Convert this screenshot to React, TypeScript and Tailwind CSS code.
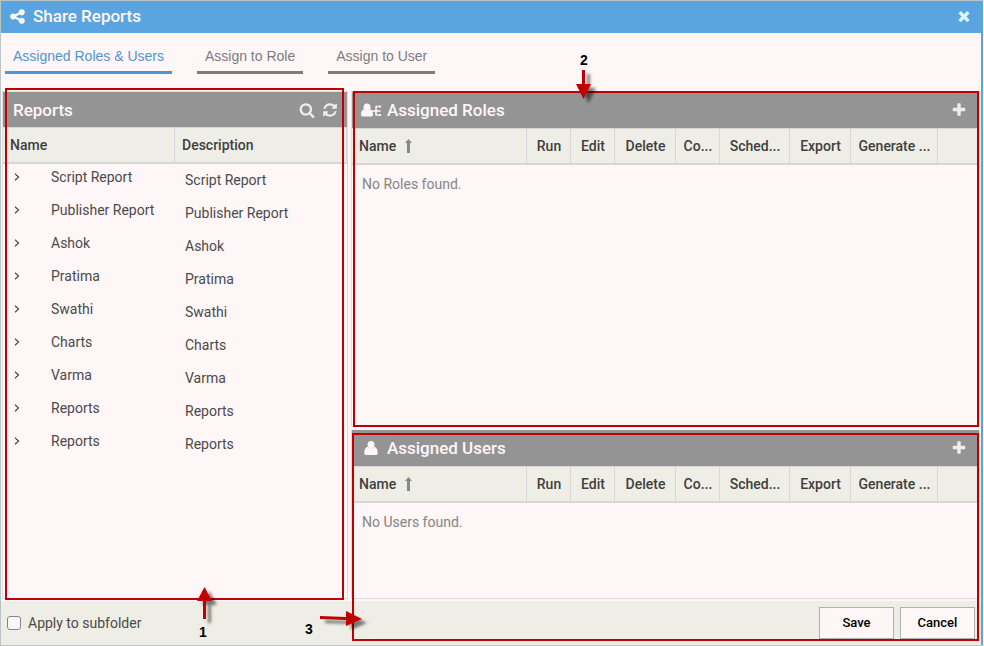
import React from "react";

const ICONS = {
  share:
    "M1344 1024q133 0 226.5 93.5t93.5 226.5-93.5 226.5-226.5 93.5-226.5-93.5-93.5-226.5q0-12 2-34l-360-180q-92 86-218 86-133 0-226.5-93.5t-93.5-226.5 93.5-226.5 226.5-93.5q126 0 218 86l360-180q-2-22-2-34 0-133 93.5-226.5t226.5-93.5 226.5 93.5 93.5 226.5-93.5 226.5-226.5 93.5q-126 0-218-86l-360 180q2 22 2 34t-2 34l360 180q92-86 218-86z",
  close:
    "M1490 1322q0 40-28 68l-136 136q-28 28-68 28t-68-28l-294-294-294 294q-28 28-68 28t-68-28l-136-136q-28-28-28-68t28-68l294-294-294-294q-28-28-28-68t28-68l136-136q28-28 68-28t68 28l294 294 294-294q28-28 68-28t68 28l136 136q28 28 28 68t-28 68l-294 294 294 294q28 28 28 68z",
  plus:
    "M1600 736v192q0 40-28 68t-68 28h-416v416q0 40-28 68t-68 28h-192q-40 0-68-28t-28-68v-416h-416q-40 0-68-28t-28-68v-192q0-40 28-68t68-28h416v-416q0-40 28-68t68-28h192q40 0 68 28t28 68v416h416q40 0 68 28t28 68z",
  search:
    "M1216 832q0-185-131.5-316.5t-316.5-131.5-316.5 131.5-131.5 316.5 131.5 316.5 316.5 131.5 316.5-131.5 131.5-316.5zm512 832q0 52-38 90t-90 38q-54 0-90-38l-343-342q-179 124-399 124-143 0-273.5-55.5t-225-150-150-225-55.5-273.5 55.5-273.5 150-225 225-150 273.5-55.5 273.5 55.5 225 150 150 225 55.5 273.5q0 220-124 399l343 343q37 37 37 90z",
  refresh:
    "M1639 1056q0 5-1 7-64 268-268 434.5t-478 166.5q-146 0-282.5-55t-243.5-157l-129 129q-19 19-45 19t-45-19-19-45v-448q0-26 19-45t45-19h448q26 0 45 19t19 45-19 45l-137 137q71 66 161 102t187 36q134 0 250-65t186-179q11-17 53-117 8-23 30-23h192q13 0 22.5 9.5t9.5 22.5zm25-800v448q0 26-19 45t-45 19h-448q-26 0-45-19t-19-45 19-45l138-138q-148-137-349-137-134 0-250 65t-186 179q-11 17-53 117-8 23-30 23h-199q-13 0-22.5-9.5t-9.5-22.5v-7q65-268 270-434.5t480-166.5q146 0 284 55.5t245 156.5l130-129q19-19 45-19t45 19 19 45z",
};

function Icon({ name, className }: { name: keyof typeof ICONS; className: string }) {
  return (
    <svg viewBox="0 0 1792 1792" className={className} fill="currentColor" aria-hidden="true">
      <path d={ICONS[name]} />
    </svg>
  );
}

function UserIcon() {
  return (
    <svg width="20" height="14" viewBox="0 0 20 14" fill="currentColor" aria-hidden="true">
      <ellipse cx="10" cy="3.8" rx="3.5" ry="3.8" />
      <path d="M6.600 5.800C4.200 6.400 3.300 8.800 3.300 12.200c0 1.100.7 1.800 1.700 1.800h10c1 0 1.700-.7 1.700-1.800 0-3.400-.9-5.800-3.300-6.400-1.800 2.200-5 2.200-6.800 0z" />
    </svg>
  );
}

function RoleIcon() {
  return (
    <svg width="20" height="14" viewBox="0 0 20 14" aria-hidden="true">
      <g fill="currentColor">
        <ellipse cx="6" cy="4.200" rx="3.500" ry="3.800" />
        <path d="M2.800 6.200C.8 7 0 9 0 11.800c0 1 .6 1.600 1.500 1.600h9c.9 0 1.500-.6 1.500-1.600 0-2.800-.8-4.800-2.800-5.600-1.700 2.200-4.700 2.200-6.400 0z" />
      </g>
      <path d="M11 8h8.500M15 3.500v9M14.500 3.500h2.500M14.500 12h2.500" stroke="currentColor" strokeWidth="1.500" fill="none" />
      <path d="M17.500 3.500h2.500M17.500 12h2.500" stroke="currentColor" strokeWidth="2" fill="none" />
    </svg>
  );
}

function SortArrow() {
  return (
    <svg width="7" height="14" viewBox="0 0 7 14" className="text-[#85888a]" aria-hidden="true">
      <path d="M3.500 0L7 4H5v10H2V4H0z" fill="currentColor" />
    </svg>
  );
}

function Chevron() {
  return (
    <svg width="6" height="8" viewBox="0 0 6 8" aria-hidden="true">
      <path d="M1 .8L4.500 4 1 7.200" stroke="#4a4a4a" strokeWidth="1.200" fill="none" />
    </svg>
  );
}

const REPORTS = [
  "Script Report",
  "Publisher Report",
  "Ashok",
  "Pratima",
  "Swathi",
  "Charts",
  "Varma",
  "Reports",
  "Reports",
];

const TABS = ["Assigned Roles & Users", "Assign to Role", "Assign to User"];

const RIGHTS = ["Run", "Edit", "Delete", "Co...", "Sched...", "Export", "Generate ..."];

const headCell = "h-[37px] border-b-2 border-[#d6d6d6] p-0 font-medium";

function ReportsPanel() {
  return (
    <section className="w-[346px] shrink-0 border border-[#dedede]">
      <header className="flex h-[35px] items-center bg-[#949494] pl-[10px] pr-[9px] text-[#fff6f7]">
        <h2 className="flex-1 text-[17px] font-medium">Reports</h2>
        <button type="button" aria-label="Search" className="mr-[7px] text-[#efeee6]">
          <Icon name="search" className="size-4" />
        </button>
        <button type="button" aria-label="Refresh" className="text-[#efeee6]">
          <Icon name="refresh" className="size-4" />
        </button>
      </header>
      <table className="w-full table-fixed border-separate border-spacing-0 text-left">
        <colgroup>
          <col className="w-[48px]" />
          <col className="w-[124px]" />
          <col />
        </colgroup>
        <thead className="bg-[#efeee6] text-[#404040]">
          <tr>
            <th colSpan={2} className={`${headCell} border-r border-t pl-[7px]`}>
              Name
            </th>
            <th className={`${headCell} border-r border-t pl-[7px]`}>Description</th>
          </tr>
        </thead>
        <tbody>
          {REPORTS.map((report, i) => (
            <tr key={i} className="h-[33px]">
              <td className="p-0 pb-2 pl-[11px]">
                <button type="button" aria-label={`Expand ${report}`} className="block">
                  <Chevron />
                </button>
              </td>
              <td className="p-0 pb-2">{report}</td>
              <td className="p-0 pb-0.5 pl-[10px]">{report}</td>
            </tr>
          ))}
        </tbody>
      </table>
    </section>
  );
}

function AssignedPanel({
  title,
  icon,
  empty,
  className,
}: {
  title: string;
  icon: React.ReactNode;
  empty: string;
  className: string;
}) {
  return (
    <section className={`border-x border-[#dedede] ${className}`}>
      <header className="flex h-9 items-center bg-[#949494] pl-[9px] pr-3 text-[#fff6f7]">
        {icon}
        <h2 className="ml-[6px] flex-1 text-[17px] font-medium">{title}</h2>
        <button type="button" aria-label={`Add to ${title}`} className="text-[#efeee6]">
          <Icon name="plus" className="size-4" />
        </button>
      </header>
      <table className="w-full table-fixed border-separate border-spacing-0">
        <colgroup>
          <col className="w-[175px]" />
          <col className="w-[44px]" />
          <col className="w-[44px]" />
          <col className="w-[61px]" />
          <col className="w-[44px]" />
          <col className="w-[70px]" />
          <col className="w-[61px]" />
          <col className="w-[87px]" />
          <col />
        </colgroup>
        <thead className="bg-[#efeee6] text-[#404040]">
          <tr>
            <th className={`${headCell} border-r border-t pl-[7px] text-left`}>
              <span className="flex items-center gap-[9px]">
                Name
                <SortArrow />
              </span>
            </th>
            {RIGHTS.map((right) => (
              <th key={right} className={`${headCell} whitespace-nowrap border-r border-t pl-px text-center`}>
                {right}
              </th>
            ))}
            <td className={`${headCell} border-t`} />
          </tr>
        </thead>
        <tbody>
          <tr>
            <td colSpan={9} className="p-0 pl-[10px] pt-[9px] text-[#858585]">
              {empty}
            </td>
          </tr>
        </tbody>
      </table>
    </section>
  );
}

function Shadow() {
  return (
    <filter id="shadow" x="-60%" y="-60%" width="250%" height="250%">
      <feDropShadow dx="5" dy="4" stdDeviation="1.500" floodColor="#000" floodOpacity="0.500" />
    </filter>
  );
}

function Annotations() {
  const label = "absolute font-['Liberation_Sans',sans-serif] text-sm leading-5 font-bold text-black";
  const box = "absolute border-2 border-[#c00000]";
  return (
    <div className="pointer-events-none absolute -inset-px">
      <div className={`${box} left-[5px] top-[88px] bottom-[46px] w-[339px]`} />
      <div className={`${box} left-[353px] top-[91px] right-[5px] bottom-[219px]`} />
      <div className={`${box} left-[352px] right-[5px] bottom-[5px] h-[208px]`} />

      <span className={`${label} left-[580px] top-[50px]`}>2</span>
      <svg width="50" height="50" className="absolute left-[570px] top-[64px] overflow-visible" aria-hidden="true">
        <defs>
          <Shadow />
        </defs>
        <path d="M12 6h3v14h6L13.500 35 6 20h6z" fill="#c00000" filter="url(#shadow)" />
      </svg>

      <span className={`${label} left-[199px] bottom-[4px]`}>1</span>
      <svg width="50" height="50" className="absolute left-[190px] bottom-[16px] overflow-visible" aria-hidden="true">
        <path d="M13 39h3V21h6L14.500 7 7 21h6z" fill="#c00000" filter="url(#shadow)" />
      </svg>

      <span className={`${label} left-[305px] bottom-[7px]`}>3</span>
      <svg width="50" height="30" className="absolute left-[315px] bottom-[10px] overflow-visible" aria-hidden="true">
        <path d="M5 10l26 1V5l16 8-16 7v-6L5 13z" fill="#c00000" filter="url(#shadow)" />
      </svg>
    </div>
  );
}

export default function App() {
  return (
    <div className="relative flex h-screen flex-col border border-y-[#b8c4c6] border-l-[#b8c4c6] border-r-white bg-[#fff6f7] font-[Roboto,sans-serif] text-sm leading-5 text-[#4a4a4a]">
      <header className="flex h-8 shrink-0 items-center bg-[#5aa5df] pb-0.5 pl-2 pr-[11px] text-[#fff6f7]">
        <Icon name="share" className="size-[17px]" />
        <h1 className="ml-[7px] flex-1 text-[17px] font-medium">Share Reports</h1>
        <button type="button" aria-label="Close" className="text-[#dcf5fb]">
          <Icon name="close" className="size-4" />
        </button>
      </header>

      <div className="flex min-h-0 flex-1 flex-col border-r-2 border-[#5aa5df]">
        <nav className="flex h-[58px] shrink-0 items-start gap-[25px] pl-1 pt-[13px] font-['Liberation_Sans',sans-serif] text-sm leading-5">
          {TABS.map((tab, i) => (
            <button
              key={tab}
              type="button"
              className={
                i === 0
                  ? "border-b-[3px] border-[#5094d2] px-2 pb-[5px] text-[#5094d2]"
                  : "border-b-[3px] border-[#7c7c7c] px-2 pb-[5px] text-[#7c7c7c]"
              }
            >
              {tab}
            </button>
          ))}
        </nav>

        <main className="flex min-h-0 flex-1 gap-[3px] pb-[2px] pl-px pr-px">
          <ReportsPanel />
          <div className="flex min-w-0 flex-1 flex-col">
            <AssignedPanel
              title="Assigned Roles"
              icon={<RoleIcon />}
              empty="No Roles found."
              className="mb-[3px] flex-1 border-y"
            />
            <AssignedPanel
              title="Assigned Users"
              icon={<UserIcon />}
              empty="No Users found."
              className="h-[169px] shrink-0 border-b"
            />
          </div>
        </main>

        <footer className="flex h-11 shrink-0 items-center bg-[#efeee6] pl-[6px] pr-[6px]">
          <label className="flex flex-1 items-center gap-[7px]">
            <input
              type="checkbox"
              className="size-[14px] appearance-none rounded-[3px] border border-[#858585] bg-[#fff6f7]"
            />
            Apply to subfolder
          </label>
          <div className="flex gap-[6px] text-[13px] font-medium text-black">
            <button type="button" className="h-8 w-[75px] border border-[#b0b0ae] bg-[#fff6f7]">
              Save
            </button>
            <button type="button" className="h-8 w-[75px] border border-[#b0b0ae] bg-[#fff6f7]">
              Cancel
            </button>
          </div>
        </footer>
      </div>

      <Annotations />
    </div>
  );
}
